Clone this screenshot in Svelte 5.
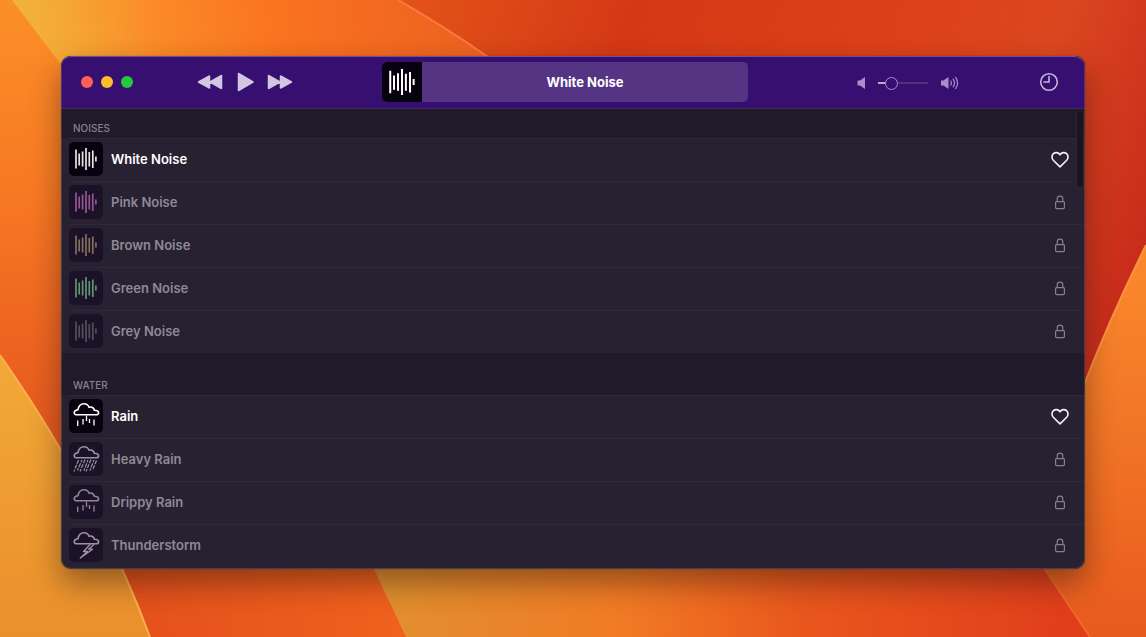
<script>
  const sections = [
    {
      title: 'Noises',
      items: [
        { name: 'White Noise', icon: 'wave', color: '#e8e4e4', open: true },
        { name: 'Pink Noise', icon: 'wave', color: '#955599' },
        { name: 'Brown Noise', icon: 'wave', color: '#85705c' },
        { name: 'Green Noise', icon: 'wave', color: '#5f9671' },
        { name: 'Grey Noise', icon: 'wave', color: '#544f5a' }
      ]
    },
    {
      title: 'Water',
      items: [
        { name: 'Rain', icon: 'rain', color: '#ffffff', open: true },
        { name: 'Heavy Rain', icon: 'heavy', color: '#98939f' },
        { name: 'Drippy Rain', icon: 'rain', color: '#8d8894' },
        { name: 'Thunderstorm', icon: 'storm', color: '#9a95a1' }
      ]
    }
  ];

  let current = $state('White Noise');
  let volume = $state(18);
</script>

{#snippet glyph(kind, color)}
  <svg class="glyph" viewBox="0 0 34 34" fill="none" stroke={color} stroke-linecap="round" stroke-linejoin="round" aria-hidden="true">
    {#if kind === 'wave'}
      <g stroke-width="1.7" stroke-linecap="butt">
        <path d="M7 7.500v19M10.200 11.500v12M13.600 9.500v15M17 6v22M20.300 10v14.500M23.800 8.500v17.500" />
        <path d="M26.900 14.500v5" />
      </g>
    {:else}
      <path stroke-width="1.600" d="M8.500 15.800C5.800 15.800 5 14.600 5.200 13.300 5.500 11.600 7.200 10.900 9 10.700 9.600 7 12 4.800 15 4.800c2.500 0 4.200 1.300 5 3.400 2.600-.6 4.800.6 5.400 3 2.700.2 4.200 1.300 4.200 2.700 0 1.200-1 1.900-2.800 1.900z" />
      {#if kind === 'rain'}
        <path stroke-width="1.300" stroke-linecap="butt" d="M8.700 21.500v5.500M14 20v5.500M17.500 16.500v5.500M20.500 20v4M25 20.500v6" />
      {:else if kind === 'heavy'}
        <g stroke-width="1.200" stroke-linecap="butt">
          <path stroke-dasharray="4 1.200" d="M9.500 18 5 29.500M16 17.500l-5 12M22 17.500 17 29.500M27.500 18.500 23.500 28.500" />
          <path stroke-dasharray="2.500 1 4.500 1" d="M13 18 8 29.500M19 18l-4.500 11.500M25 18l-4.500 11.500" />
        </g>
      {:else}
        <path stroke-width="1.300" d="M21 16.500 14.500 23.500h4L11.300 30 23.500 21.200h-4L25 16.500" />
      {/if}
    {/if}
  </svg>
{/snippet}

<div class="desktop">
  <svg class="wallpaper" viewBox="0 0 1146 637" preserveAspectRatio="none" aria-hidden="true">
    <defs>
      <linearGradient id="left" x1="0" y1="0" x2="0" y2="1">
        <stop offset="0" stop-color="#fb8f27" /><stop offset=".4" stop-color="#f87a24" /><stop offset="1" stop-color="#e5561f" />
      </linearGradient>
      <linearGradient id="top" gradientUnits="userSpaceOnUse" x1="20" y1="60" x2="450" y2="20">
        <stop offset="0" stop-color="#f1b33b" /><stop offset=".12" stop-color="#f5a734" /><stop offset=".32" stop-color="#fb8a27" /><stop offset=".6" stop-color="#fa7320" /><stop offset="1" stop-color="#ee6420" />
      </linearGradient>
      <linearGradient id="red" gradientUnits="userSpaceOnUse" x1="400" y1="0" x2="1146" y2="260">
        <stop offset="0" stop-color="#e35418" /><stop offset=".28" stop-color="#d43916" /><stop offset=".6" stop-color="#dc4018" /><stop offset=".8" stop-color="#db4720" /><stop offset="1" stop-color="#c72b1b" />
      </linearGradient>
      <linearGradient id="sun" x1="0" y1="0" x2="0" y2="1">
        <stop offset="0" stop-color="#f2a936" /><stop offset="1" stop-color="#ea8f2d" />
      </linearGradient>
      <linearGradient id="ember" x1="0" y1="0" x2="1" y2="0">
        <stop offset="0" stop-color="#e14c1b" /><stop offset="1" stop-color="#f0621e" />
      </linearGradient>
      <linearGradient id="base" gradientUnits="userSpaceOnUse" x1="380" y1="590" x2="1080" y2="637">
        <stop offset="0" stop-color="#e19030" /><stop offset=".35" stop-color="#f17a25" /><stop offset=".6" stop-color="#e9571d" /><stop offset="1" stop-color="#e03d1b" />
      </linearGradient>
      <linearGradient id="right" x1="0" y1="0" x2="0" y2="1">
        <stop offset="0" stop-color="#fa8a2d" /><stop offset=".5" stop-color="#f17426" /><stop offset="1" stop-color="#e85a1e" />
      </linearGradient>
    </defs>
    <rect width="1146" height="637" fill="url(#red)" />
    <path d="M12 0H398Q445 27 488 57V300H160Z" fill="url(#top)" />
    <path d="M0 0H12L62 66V450L0 355Z" fill="url(#left)" />
    <path d="M398 0Q445 27 488 57" fill="none" stroke="#fb7a40" stroke-width="2" />
    <path d="M60 440 150 637H410L370 560V440Z" fill="url(#ember)" />
    <path d="M0 355Q35 405 62 452 118 550 150 637H0Z" fill="url(#sun)" />
    <path d="M0 355Q35 405 62 452 118 550 150 637" fill="none" stroke="#fbb04f" stroke-width="2" />
    <path d="M372 565 406 637H1095L1050 565Z" fill="url(#base)" />
    <path d="M1146 245Q1110 318 1084 385L1040 560 1090 637H1146Z" fill="url(#right)" />
    <path d="M1146 245Q1110 318 1084 385" fill="none" stroke="#fd9342" stroke-width="2" />
    <path d="M1044 568 1090 637" fill="none" stroke="#f06a2a" stroke-width="2" />
  </svg>

  <main class="window">
    <header class="toolbar">
      <div class="lights">
        <button class="light close" aria-label="Close"></button>
        <button class="light minimise" aria-label="Minimise"></button>
        <button class="light zoom" aria-label="Zoom"></button>
      </div>

      <div class="transport">
        <button aria-label="Previous">
          <svg width="26" height="16" viewBox="0 0 26 16"><path d="M12.500 2v12L1.500 8zM24.500 1.500v13L13 8z" /></svg>
        </button>
        <button aria-label="Play">
          <svg width="18" height="20" viewBox="0 0 18 20"><path d="M2.500 1.500v17L17 10z" /></svg>
        </button>
        <button aria-label="Next">
          <svg width="26" height="16" viewBox="0 0 26 16"><path d="M1.500 1.500v13L13 8zM13.500 2v12L24.500 8z" /></svg>
        </button>
      </div>

      <div class="playing">
        <div class="art">{@render glyph('wave', '#ffffff')}</div>
        <span>{current}</span>
      </div>

      <div class="volume">
        <svg width="10" height="14" viewBox="0 0 10 14" aria-hidden="true"><path fill="#a98fc9" d="M1.500 4.500h2.500L9 1v12L4 9.500H1.500z" /></svg>
        <input type="range" min="0" max="100" bind:value={volume} aria-label="Volume" style="--level: {volume}%" />
        <svg width="20" height="14" viewBox="0 0 20 14" aria-hidden="true">
          <path fill="#a98fc9" d="M1 4.500h2.500L8.500 1v12L3.500 9.500H1z" />
          <path fill="none" stroke="#a98fc9" stroke-width="1.200" stroke-linecap="round" d="M10.800 5q1.200 2 0 4M13.200 3.200q2.600 3.800 0 7.600M15.600 1.400q4 5.600 0 11.200" />
        </svg>
      </div>

      <button class="timer" aria-label="Timer">
        <svg width="20" height="20" viewBox="0 0 20 20" fill="none" stroke="#c5b3dc" stroke-width="1.600" stroke-linecap="round"><circle cx="10" cy="10" r="8.300" /><path d="M10 4.500V10H5" /></svg>
      </button>
    </header>

    <div class="library">
      {#each sections as section}
        <section>
          <h2>{section.title}</h2>
          <ul>
            {#each section.items as item}
              <li class:locked={!item.open}>
                <button class="track" disabled={!item.open} onclick={() => (current = item.name)}>
                  <span class="tile">{@render glyph(item.icon, item.color)}</span>
                  <span>{item.name}</span>
                </button>
                {#if item.open}
                  <button class="favourite" aria-label="Add {item.name} to favourites">
                    <svg width="18" height="18" viewBox="0 0 18 18" fill="none" stroke="#f3eff7" stroke-width="1.600" stroke-linejoin="round"><path d="M9 16.900 2.300 10.200C.5 8.300.6 5.400 2.400 3.700c1.900-1.700 4.700-1.400 6.200.6l.4.600.4-.6c1.500-2 4.300-2.300 6.200-.6 1.800 1.700 1.900 4.600.1 6.500z" /></svg>
                  </button>
                {:else}
                  <svg class="lock" width="18" height="18" viewBox="0 0 18 18" fill="none" stroke="#85808c" stroke-width="1.200" role="img" aria-label="Locked"><rect x="4.600" y="8.600" width="8.800" height="7" rx="1" /><path d="M6.200 8.500V5.900a2.800 2.800 0 0 1 5.600 0v2.600" /></svg>
                {/if}
              </li>
            {/each}
          </ul>
        </section>
      {/each}
      <div class="scrollbar"></div>
    </div>
  </main>
</div>

<style>
  :global(body) {
    margin: 0;
  }

  .desktop {
    position: relative;
    box-sizing: border-box;
    display: flex;
    min-height: 100vh;
    padding: 56px 61px 68px;
    overflow: hidden;
    font-family: Inter, "Liberation Sans", sans-serif;
    font-size: 13px;
    color: #fff;
  }

  .wallpaper {
    position: absolute;
    inset: 0;
    width: 100%;
    height: 100%;
  }

  .window {
    position: relative;
    flex: 1;
    min-width: 0;
    display: flex;
    flex-direction: column;
    overflow: hidden;
    border-radius: 10px;
    background: #282132;
    box-shadow: 0 0 1px rgba(0, 0, 0, 0.5), 0 14px 30px rgba(40, 20, 10, 0.45);
  }

  .window::after {
    content: "";
    position: absolute;
    inset: 0;
    border: 1px solid rgba(255, 255, 255, 0.14);
    border-top-color: rgba(255, 255, 255, 0.28);
    border-radius: 10px;
    pointer-events: none;
  }

  button {
    padding: 0;
    border: 0;
    background: none;
    color: inherit;
    font: inherit;
  }

  svg {
    display: block;
  }

  .toolbar {
    display: grid;
    grid-template-columns: 116px 185fr 366px 281fr 56px;
    align-items: center;
    height: 53px;
    padding: 0 0 0 20px;
    background: #360f70;
    border-bottom: 1px solid #3d2a59;
    box-sizing: border-box;
  }

  .lights {
    display: flex;
    gap: 8px;
  }

  .light {
    width: 12px;
    height: 12px;
    border-radius: 50%;
  }

  .close {
    background: #ff5f57;
  }

  .minimise {
    background: #febc2e;
  }

  .zoom {
    background: #28c840;
  }

  .transport {
    display: flex;
    align-items: center;
    gap: 13px;
  }

  .transport path {
    fill: #d3c6e2;
    stroke: #d3c6e2;
    stroke-width: 1.5;
    stroke-linejoin: round;
  }

  .playing {
    display: flex;
    align-items: center;
    height: 40px;
    border-radius: 5px;
    overflow: hidden;
    background: #553484;
    font-weight: 700;
  }

  .playing span {
    flex: 1;
    text-align: center;
  }

  .art {
    width: 40px;
    height: 40px;
    background: #08010f;
  }

  .volume {
    display: flex;
    align-items: center;
    justify-content: flex-end;
    gap: 12px;
    padding: 2px 69px 0 0;
  }

  input {
    appearance: none;
    width: 50px;
    height: 14px;
    margin: 0;
    background: linear-gradient(90deg, #bba6d4 var(--level), #50307d var(--level)) center / 100% 2px no-repeat;
  }

  input::-webkit-slider-thumb {
    appearance: none;
    box-sizing: border-box;
    width: 13px;
    height: 13px;
    border: 1px solid #a98fc9;
    border-radius: 50%;
    background: #360f70;
  }

  .timer {
    justify-self: start;
    padding-left: 10px;
  }

  .library {
    position: relative;
    flex: 1;
    overflow: hidden;
  }

  h2 {
    display: flex;
    align-items: flex-end;
    box-sizing: border-box;
    height: 29px;
    margin: 0;
    padding: 0 12px 4px;
    background: #201a2a;
    color: #87828e;
    font-size: 10px;
    font-weight: 500;
    line-height: 12px;
    text-transform: uppercase;
  }

  section + section h2 {
    height: 42px;
  }

  ul {
    margin: 0;
    padding: 0;
    list-style: none;
  }

  li {
    display: flex;
    align-items: center;
    box-sizing: border-box;
    height: 43px;
    margin-left: 8px;
    padding: 0 16px 2px 0;
    border-top: 1px solid #2f2838;
    font-weight: 600;
  }

  .track {
    display: flex;
    flex: 1;
    align-items: center;
    gap: 8px;
    text-align: left;
  }

  .tile {
    width: 34px;
    height: 34px;
    border-radius: 5px;
    background: #08010f;
  }

  .locked {
    color: #8e8995;
  }

  .locked .tile {
    background: #1b1227;
  }

  .glyph {
    width: 100%;
    height: 100%;
  }

  .scrollbar {
    position: absolute;
    top: 1px;
    right: 1px;
    width: 8px;
    height: 78px;
    box-sizing: border-box;
    border: 1px solid #2c2534;
    border-radius: 4px;
    background: #19141f;
  }
</style>
